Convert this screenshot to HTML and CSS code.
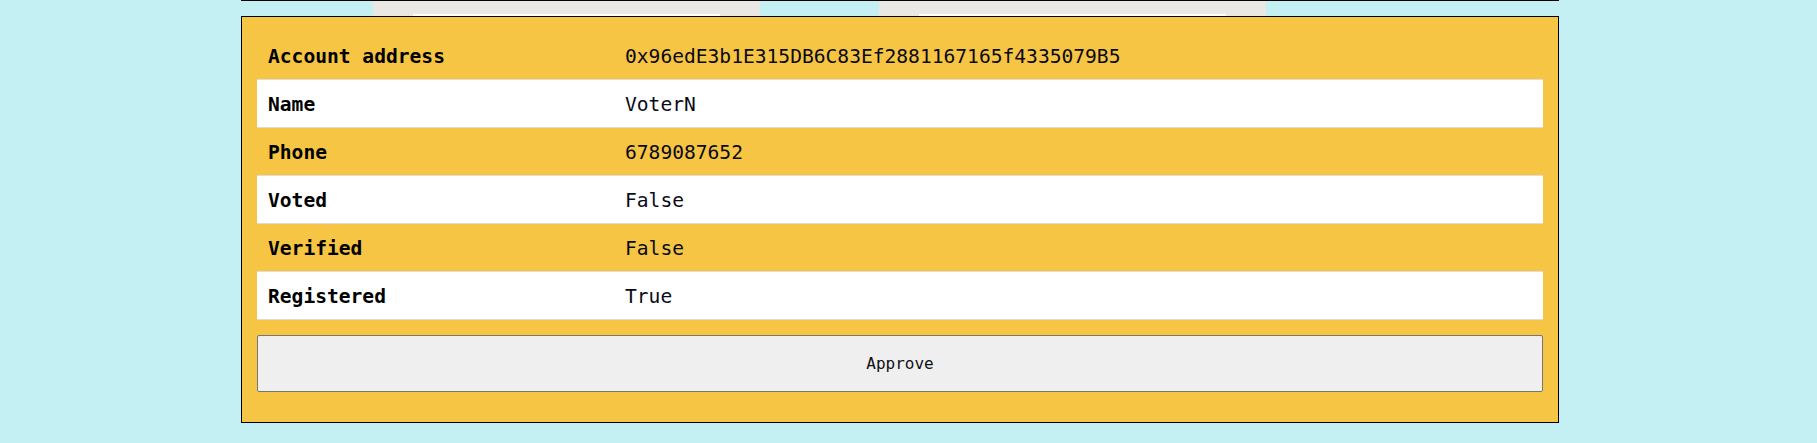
FILE: index.html
```html
<!DOCTYPE html>
<html lang="en">
<head>
<meta charset="utf-8">
<title>Voter details</title>
<link rel="stylesheet" href="styles.css">
</head>
<body>
<div class="page">
  <div class="top-strip">
    <div class="peek"><div class="peek-inner"></div></div>
    <div class="peek"><div class="peek-inner"></div></div>
  </div>
  <div class="card">
    <div class="table">
      <div class="row"><div class="label">Account address</div><div class="value">0x96edE3b1E315DB6C83Ef2881167165f4335079B5</div></div>
      <div class="row alt"><div class="label">Name</div><div class="value">VoterN</div></div>
      <div class="row"><div class="label">Phone</div><div class="value">6789087652</div></div>
      <div class="row alt"><div class="label">Voted</div><div class="value">False</div></div>
      <div class="row"><div class="label">Verified</div><div class="value">False</div></div>
      <div class="row alt"><div class="label">Registered</div><div class="value">True</div></div>
    </div>
    <button class="approve" type="button">Approve</button>
  </div>
</div>
</body>
</html>
```

FILE: styles.css
```css
html, body {
  margin: 0;
  padding: 0;
}
body {
  background: #c5f0f3;
  padding-right: 17px;
  font-family: "DejaVu Sans Mono", "Liberation Mono", monospace;
  color: #000;
}
.page {
  width: 1318px;
  margin: 0 auto;
}
.top-strip {
  border-top: 1px solid #000;
  height: 15px;
  display: flex;
  gap: 119px;
  padding-left: 132px;
}
.peek {
  width: 387px;
  background: #e9e8e4;
  display: flex;
  align-items: flex-end;
  padding: 0 40px;
  box-sizing: border-box;
}
.peek-inner {
  width: 307px;
  height: 2px;
  background: #fff;
}
.card {
  box-sizing: border-box;
  width: 1318px;
  background: #f5c543;
  border: 1px solid #000;
  padding: 15px 15px 30px 15px;
}
.table {
  display: flex;
  flex-direction: column;
}
.row {
  display: grid;
  grid-template-columns: 358px 1fr;
  height: 48px;
  box-sizing: border-box;
  padding-top: 2px;
  border-bottom: 1px solid #dcdcdc;
  align-items: center;
  font-size: 19.6px;
}
.row.alt {
  background: #fff;
}
.label {
  font-weight: bold;
  padding-left: 11px;
}
.value {
  padding-left: 10px;
  color: #0a0a18;
}
.approve {
  display: block;
  width: 100%;
  height: 57px;
  margin-top: 15px;
  background: #efefef;
  border: 1px solid #767676;
  border-radius: 2px;
  font-family: "DejaVu Sans Mono", "Liberation Mono", monospace;
  font-size: 16px;
  color: #111;
  padding: 0;
}
```
